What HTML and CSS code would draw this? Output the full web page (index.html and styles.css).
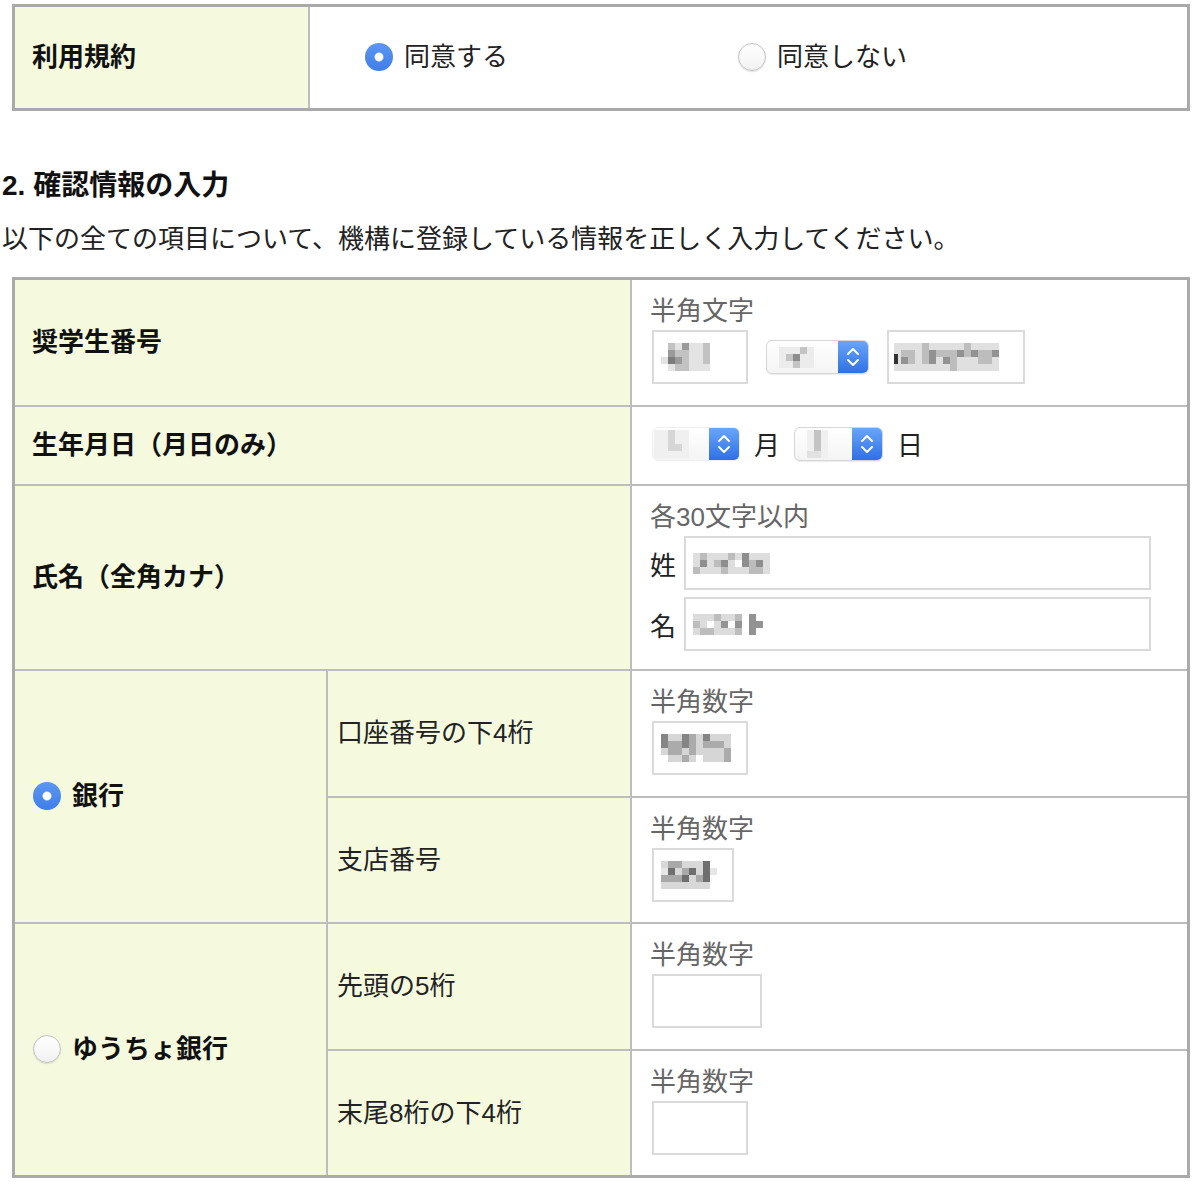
FILE: index.html
```html
<!doctype html>
<html lang="ja">
  <head>
    <meta charset="utf-8">
    <title>確認情報の入力</title>
    <link rel="stylesheet" href="styles.css">
  </head>
  <body>
    <div id="wrap">
      <div class="form terms">
        <div class="head">利用規約</div>
        <div class="choices">
          <label class="choice"><span class="radio on"></span>同意する</label>
          <label class="choice"><span class="radio"></span>同意しない</label>
        </div>
      </div>

      <h2>2. 確認情報の入力</h2>
      <p class="lead">以下の全ての項目について、機構に登録している情報を正しく入力してください。</p>

      <div class="form info">
        <!-- student number -->
        <div class="head wide">奨学生番号</div>
        <div class="field">
          <div class="hint">半角文字</div>
          <div class="inputs">
            <span class="box w96">
              <svg class="mosaic" width="49" height="28" viewBox="0 0 7 4" shape-rendering="crispEdges">
                <path fill="#e3e3e3" d="M0 2h1v1H0zM1 0h6v4H1z"/>
                <path fill="#c2c2c2" d="M1 0h1v1H1zM2 1h2v1H2zM3 2h1v2H3zM6 0h1v3H6zM2 3h1v1H2z"/>
                <path fill="#9a9a9a" d="M1 1h1v1H1zM2 2h1v1H2zM3 0h1v1H3z"/>
                <path fill="#7c7c7c" d="M1 2h1v1H1z"/>
              </svg>
            </span>
            <span class="select w103">
              <span class="value">
                <svg class="mosaic" width="35" height="21" viewBox="0 0 5 3" shape-rendering="crispEdges">
                  <path fill="#ececec" d="M0 0h5v3H0z"/>
                  <path fill="#c4c4c4" d="M1 1h2v1H1zM3 0h1v1H3zM2 2h1v1H2z"/>
                  <path fill="#8d8d8d" d="M2 1h1v1H2z"/>
                </svg>
              </span>
              <span class="arrow"><svg width="30" height="32" viewBox="0 0 30 32"><path d="M10 13l5-5 5 5M10 19l5 5 5-5"/></svg></span>
            </span>
            <span class="box w138">
              <svg class="mosaic" width="105" height="28" viewBox="0 0 15 4" shape-rendering="crispEdges">
                <path fill="#e0e0e0" d="M0 0h15v4H0z"/>
                <path fill="#bdbdbd" d="M1 1h2v1H1zM4 0h1v3H4zM6 1h3v1H6zM10 0h1v2H10zM12 1h2v2H12zM8 2h1v2H8zM2 2h1v1H2z"/>
                <path fill="#929292" d="M1 2h1v1H1zM5 1h1v2H5zM9 1h1v1H9zM11 1h1v1H11zM14 1h1v1H14zM7 2h1v1H7z"/>
                <path fill="#333" d="M0 1.5h.5v1.5H0z"/>
              </svg>
            </span>
          </div>
        </div>

        <!-- birthday -->
        <div class="head wide">生年月日（月日のみ）</div>
        <div class="field date">
          <span class="select w88 flat">
            <span class="value">
              <svg class="mosaic" width="35" height="28" viewBox="0 0 5 4" shape-rendering="crispEdges">
                <path fill="#f0f0f0" d="M0 0h5v4H0z"/>
                <path fill="#d6d6d6" d="M2 0h1v3H2zM3 2h1v1H3z"/>
              </svg>
            </span>
            <span class="arrow"><svg width="30" height="32" viewBox="0 0 30 32"><path d="M10 13l5-5 5 5M10 19l5 5 5-5"/></svg></span>
          </span>
          <span class="unit">月</span>
          <span class="select w89">
            <span class="value">
              <svg class="mosaic" width="21" height="28" viewBox="0 0 3 4" shape-rendering="crispEdges">
                <path fill="#f0f0f0" d="M0 0h3v4H0z"/>
                <path fill="#c4c4c4" d="M1 0h1v3H1z"/>
                <path fill="#e2e2e2" d="M0 3h2v1H0z"/>
              </svg>
            </span>
            <span class="arrow"><svg width="30" height="32" viewBox="0 0 30 32"><path d="M10 13l5-5 5 5M10 19l5 5 5-5"/></svg></span>
          </span>
          <span class="unit">日</span>
        </div>

        <!-- name in kana -->
        <div class="head wide">氏名（全角カナ）</div>
        <div class="field">
          <div class="hint">各30文字以内</div>
          <div class="name">
            <span class="name-label">姓</span>
            <span class="box w467">
              <svg class="mosaic" width="77" height="21" viewBox="0 0 11 3" shape-rendering="crispEdges">
                <path fill="#dedede" d="M0 0h11v3H0z"/>
                <path fill="#fff" d="M6 1h1v1H6z"/>
                <path fill="#bcbcbc" d="M1 0h1v1H1zM3 1h1v1H3zM5 0h1v1H5zM8 1h2v2H8zM0 2h1v1H0zM4 2h1v1H4z"/>
                <path fill="#8e8e8e" d="M1 1h1v1H1zM4 1h1v1H4zM7 0h1v2H7zM9 1h1v1H9z"/>
              </svg>
            </span>
          </div>
          <div class="name">
            <span class="name-label">名</span>
            <span class="box w467">
              <svg class="mosaic" width="77" height="21" viewBox="0 0 11 3" shape-rendering="crispEdges">
                <path fill="#dcdcdc" d="M0 0h7v3H0zM8 0h1v3H8z"/>
                <path fill="#fff" d="M2 1h1v1H2zM5 1h1v1H5z"/>
                <path fill="#bdbdbd" d="M0 1h1v1H0zM3 0h1v1H3zM6 0h1v3H6zM1 2h2v1H1z"/>
                <path fill="#939393" d="M4 1h1v1H4zM6 1h1v1H6zM8 0h1v3H8zM9 1h1v1H9z"/>
              </svg>
            </span>
          </div>
        </div>

        <!-- bank account -->
        <div class="head tall">
          <label class="choice"><span class="radio on"></span>銀行</label>
        </div>
        <div class="sub">口座番号の下4桁</div>
        <div class="field">
          <div class="hint">半角数字</div>
          <div class="inputs">
            <span class="box w96">
              <svg class="mosaic" width="70" height="28" viewBox="0 0 10 4" shape-rendering="crispEdges">
                <path fill="#d6d6d6" d="M0 0h10v4H0z"/>
                <path fill="#fff" d="M0 3h1v1H0zM5 3h1v1H5z"/>
                <path fill="#ababab" d="M1 1h2v2H1zM4 0h1v3H4zM6 1h3v1H6zM9 2h1v2H9zM3 3h1v1H3z"/>
                <path fill="#858585" d="M0 0h1v2H0zM3 0h1v2H3zM6 0h1v1H6z"/>
              </svg>
            </span>
          </div>
        </div>
        <div class="sub">支店番号</div>
        <div class="field">
          <div class="hint">半角数字</div>
          <div class="inputs">
            <span class="box w82">
              <svg class="mosaic" width="56" height="28" viewBox="0 0 8 4" shape-rendering="crispEdges">
                <path fill="#d8d8d8" d="M0 0h7v4H0z"/>
                <path fill="#e6e6e6" d="M7 1h1v1H7zM0 1h1v1H0z"/>
                <path fill="#a9a9a9" d="M1 0h2v1H1zM3 1h2v1H3zM0 2h3v1H0zM5 2h1v1H5z"/>
                <path fill="#6f6f6f" d="M1 1h1v1H1zM3 2h1v1H3zM4 1h1v1H4zM6 0h1v3H6z"/>
              </svg>
            </span>
          </div>
        </div>

        <!-- post bank account -->
        <div class="head tall">
          <label class="choice"><span class="radio"></span>ゆうちょ銀行</label>
        </div>
        <div class="sub">先頭の5桁</div>
        <div class="field">
          <div class="hint">半角数字</div>
          <div class="inputs">
            <span class="box w110"></span>
          </div>
        </div>
        <div class="sub">末尾8桁の下4桁</div>
        <div class="field">
          <div class="hint">半角数字</div>
          <div class="inputs">
            <span class="box w96"></span>
          </div>
        </div>
      </div>
    </div>
  </body>
</html>
```

FILE: styles.css
```css
body {
  margin: 0;
  background-color: #fff;
  color: #222;
  font-family: "Liberation Sans", "Noto Sans CJK JP", sans-serif;
  font-size: 26px;
}

div#wrap {
  padding: 4px 0 20px 2px;
}

/* bordered forms: grid background shows through the gaps as rules */
.form {
  display: grid;
  gap: 2px;
  width: 1178px;
  margin-left: 10px;
  box-sizing: border-box;
  border: 3px solid #aaa;
  background-color: #bdbdbd;
}

.terms {
  grid-template-columns: 293px 1fr;
  grid-template-rows: 101px;
}

.info {
  margin-top: 21px;
  grid-template-columns: 311px 302px 1fr;
  grid-template-rows: 125px 77px 183px 125px 124px 125px 124px;
}

.head {
  display: flex;
  align-items: center;
  padding: 0 0 6px 17px;
  font-weight: bold;
  color: #111;
  background-color: #f5fadf;
}

.head.wide {
  grid-column: span 2;
}

.head.tall {
  grid-row: span 2;
  padding-left: 18px;
}

.sub {
  display: flex;
  align-items: center;
  padding: 0 0 6px 9px;
  background-color: #f5fadf;
}

.choices {
  display: flex;
  align-items: center;
  padding: 0 0 6px 55px;
  background-color: #fff;
}

.choice {
  display: flex;
  align-items: center;
  gap: 11px;
  width: 373px;
}

.head .choice {
  width: auto;
}

.radio {
  width: 28px;
  height: 28px;
  margin-top: 4px;
  box-sizing: border-box;
  border-radius: 50%;
  border: 1px solid #c2c2c2;
  background: linear-gradient(#fff, #f2f2f2);
  box-shadow: 0 1px 1px rgba(0, 0, 0, 0.12);
}

.radio.on {
  border: none;
  background:
    radial-gradient(circle, #fff 0 3.5px, #dfe8f7 4px, rgba(255, 255, 255, 0) 5px),
    linear-gradient(#5c97f1, #3f7de8);
  box-shadow: none;
}

h2 {
  margin: 57px 0 0;
  font-size: 28px;
  line-height: 36px;
  color: #111;
}

p.lead {
  margin: 18px 0 0;
  line-height: 34px;
}

.field {
  padding: 14px 18px 0;
  background-color: #fff;
}

.hint {
  line-height: 34px;
  color: #666;
}

.inputs {
  display: flex;
  align-items: center;
  gap: 18px;
  margin-top: 2px;
  padding-left: 2px;
}

.box {
  display: flex;
  align-items: center;
  height: 54px;
  box-sizing: border-box;
  padding-left: 7px;
  border: 2px solid #dadada;
  background-color: #fff;
}

.w82 { width: 82px; }
.w96 { width: 96px; }
.w110 { width: 110px; }
.w138 { width: 138px; padding-left: 5px; }
.w467 { width: 467px; }
.w88 { width: 88px; }
.w89 { width: 89px; }
.w103 { width: 103px; }

.mosaic {
  display: block;
}

/* popup selects with the blue stepper on the right */
.select {
  display: flex;
  height: 34px;
  box-sizing: border-box;
  border: 1px solid #d6d6d6;
  border-radius: 6px;
  overflow: hidden;
  background: linear-gradient(#fff, #f4f4f4);
  box-shadow: 0 1px 1px rgba(0, 0, 0, 0.08);
}

.select.flat {
  border-color: #f0f0f0;
  box-shadow: none;
}

.select .value {
  display: flex;
  align-items: center;
  flex: 1;
  padding-left: 12px;
}

.select.flat .value {
  padding-left: 1px;
}

.select .arrow {
  width: 30px;
  background: linear-gradient(#69a5fa, #2f70e6);
}

.select .arrow svg {
  display: block;
}

.select .arrow path {
  fill: none;
  stroke: #fff;
  stroke-width: 2;
  stroke-linecap: round;
  stroke-linejoin: round;
}

.date {
  display: flex;
  align-items: center;
  padding: 0 18px 4px 20px;
}

.unit {
  margin: 0 14px;
}

.name {
  display: flex;
  align-items: center;
  gap: 9px;
  margin-top: 2px;
}

.name + .name {
  margin-top: 7px;
}

.name-label {
  width: 25px;
}
```
